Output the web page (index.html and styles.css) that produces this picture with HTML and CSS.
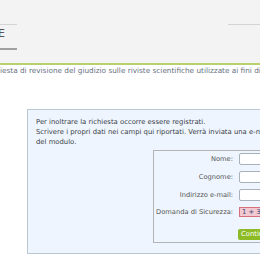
FILE: index.html
```html
<!DOCTYPE html>
<html lang="it">
<head>
    <meta charset="UTF-8">
    <title>Richiesta di revisione</title>
    <link rel="stylesheet" href="styles.css">
</head>
<body>
    <div class="top">
        <div class="tab">E</div>
        <div class="tab-line"></div>
    </div>
    <p class="intro">iesta di revisione del giudizio sulle riviste scientifiche utilizzate ai fini di valutazione</p>
    <div class="box">
        <p class="msg">
            Per inoltrare la richiesta occorre essere registrati.<br>
            Scrivere i propri dati nei campi qui riportati. Verrà inviata una e-mail di conferma<br>
            del modulo.
        </p>
        <form class="form">
            <label for="nome">Nome:</label>
            <input type="text" id="nome">
            <label for="cognome">Cognome:</label>
            <input type="text" id="cognome">
            <label for="email">Indirizzo e-mail:</label>
            <input type="text" id="email">
            <label>Domanda di Sicurezza:</label>
            <span class="captcha">1 + 3 =</span>
            <span></span>
            <button type="button">Continua</button>
        </form>
    </div>
</body>
</html>
```

FILE: styles.css
```css
html, body {
    margin: 0;
    overflow: hidden;
    background: #fff;
    font-family: 'DejaVu Sans', Verdana, sans-serif;
}
.top {
    height: 63px;
    background: #f3f3f3;
    border-bottom: 2px solid #b9d06e;
    display: flex;
    align-items: flex-start;
    justify-content: space-between;
}
.tab {
    margin-top: 24px;
    width: 17px;
    height: 26px;
    border-top: 1px solid #d4d4d4;
    border-bottom: 2px solid #a0a0a0;
    font-size: 11px;
    line-height: 14px;
    padding-top: 2px;
    color: #555;
    box-sizing: border-box;
    text-indent: -2px;
}
.tab-line {
    margin-top: 24px;
    width: 32px;
    border-top: 1px solid #d4d4d4;
}
.intro {
    margin: 0;
    padding-top: 1px;
    font-size: 7.3px;
    line-height: 10px;
    color: #66727f;
    white-space: nowrap;
}
.box {
    margin: 33px 0 0 27px;
    width: 400px;
    height: 145px;
    background: #eef5fe;
    border: 1px solid #bac6d2;
    box-sizing: border-box;
    padding: 7px 0 0 8px;
}
.msg {
    margin: 0;
    font-size: 6.85px;
    line-height: 10px;
    color: #3a3f47;
    white-space: nowrap;
}
.form {
    margin: 3px 0 0 117px;
    width: 300px;
    border: 1px solid #b4b4b4;
    padding: 2px 0 2px 0;
    display: grid;
    grid-template-columns: 79px 150px;
    column-gap: 6px;
    row-gap: 6px;
    align-items: center;
}
.form label {
    text-align: right;
    font-size: 6.7px;
    color: #555;
    white-space: nowrap;
}
.form input {
    height: 12px;
    width: 60px;
    box-sizing: border-box;
    border: 1px solid #a9b1ba;
    border-radius: 2px;
    background: #fff;
    margin: 0;
    padding: 0;
}
.captcha {
    width: 40px;
    height: 10px;
    box-sizing: border-box;
    background: #f2c9d0;
    border: 1px solid #d8707c;
    font-size: 6.8px;
    line-height: 8px;
    padding-left: 2px;
    color: #3c4a78;
}
.form button {
    margin-top: 6px;
    margin-left: -1px;
    width: 44px;
    height: 11px;
    padding: 0 0 0 3px;
    text-align: left;
    background: #8cbb26;
    border: none;
    border-radius: 2px;
    color: #fff;
    font-family: inherit;
    font-size: 6.8px;
    line-height: 11px;
}
```
